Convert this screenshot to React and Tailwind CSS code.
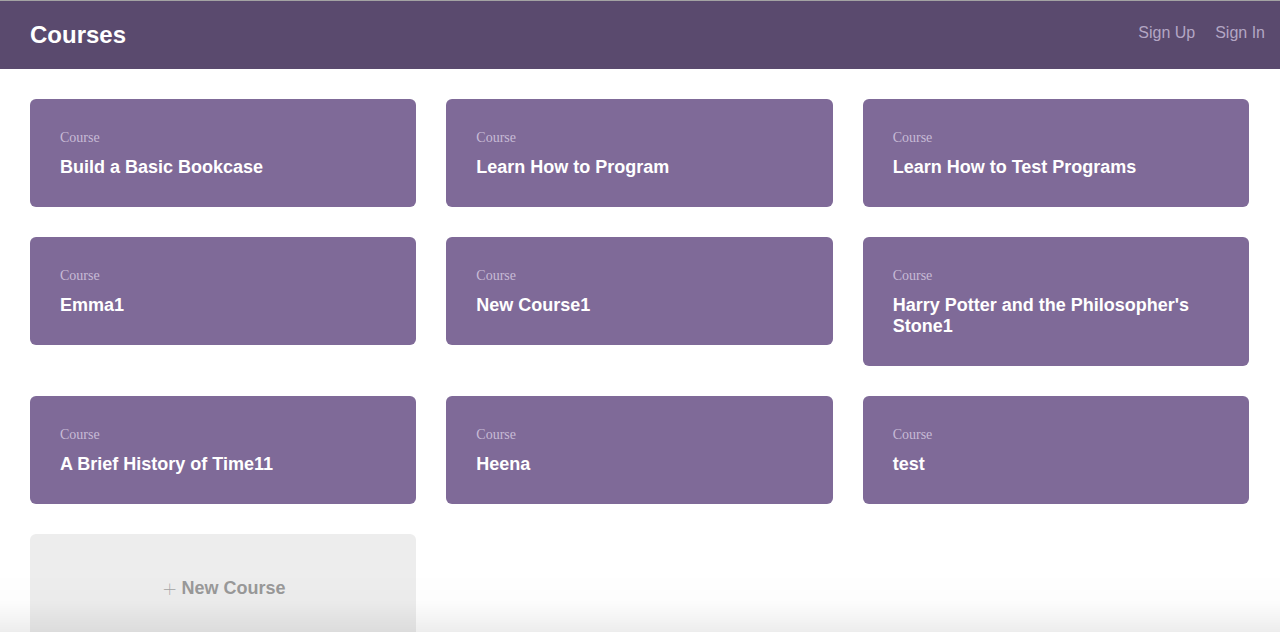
import React from 'react';

const courses = [
  'Build a Basic Bookcase',
  'Learn How to Program',
  'Learn How to Test Programs',
  'Emma1',
  'New Course1',
  "Harry Potter and the Philosopher's Stone1",
  'A Brief History of Time11',
  'Heena',
  'test',
];

const CourseCard = ({ title }) => (
  <div className="bg-[#7f6a98] rounded-[6px] px-[30px] pt-[31px] pb-[29px]">
    <p className="font-['Liberation_Serif',serif] text-[14px] leading-[16px] text-[#c7bbd6]">Course</p>
    <h3 className="mt-[11px] font-['Liberation_Sans',Arial,sans-serif] font-bold text-[18px] leading-[21px] text-white pr-[20px]">
      {title}
    </h3>
  </div>
);

const App = () => {
  return (
    <div className="min-h-screen bg-white font-['Liberation_Sans',Arial,sans-serif]">
      <header className="h-[69px] border-t border-[#a3a3a3] bg-[#5a4a6e] flex items-center justify-between pl-[30px] pr-[15px]">
        <h1 className="text-[24px] font-bold text-white">Courses</h1>
        <nav className="flex gap-[20px] text-[16px] text-[#b3a6c4] -mt-[5px]">
          <a href="#">Sign Up</a>
          <a href="#">Sign In</a>
        </nav>
      </header>

      <main className="grid grid-cols-3 gap-[30px] items-start pt-[30px] pl-[30px] pr-[31px]">
        {courses.map((c) => (
          <CourseCard key={c} title={c} />
        ))}
        <div className="h-[108px] bg-[#ededed] rounded-[6px] flex items-center justify-center text-[18px] font-bold text-[#999999]">
          <span className="font-['Inter',sans-serif] font-thin text-[28px] leading-none mr-[3px] -mt-[3px] text-[#a3a3a3]">+</span>New Course
        </div>
      </main>

      <div className="fixed left-0 right-0 bottom-0 h-[60px] pointer-events-none bg-gradient-to-b from-transparent via-black/[0.01] to-black/[0.07]" />
    </div>
  );
};

export default App;
